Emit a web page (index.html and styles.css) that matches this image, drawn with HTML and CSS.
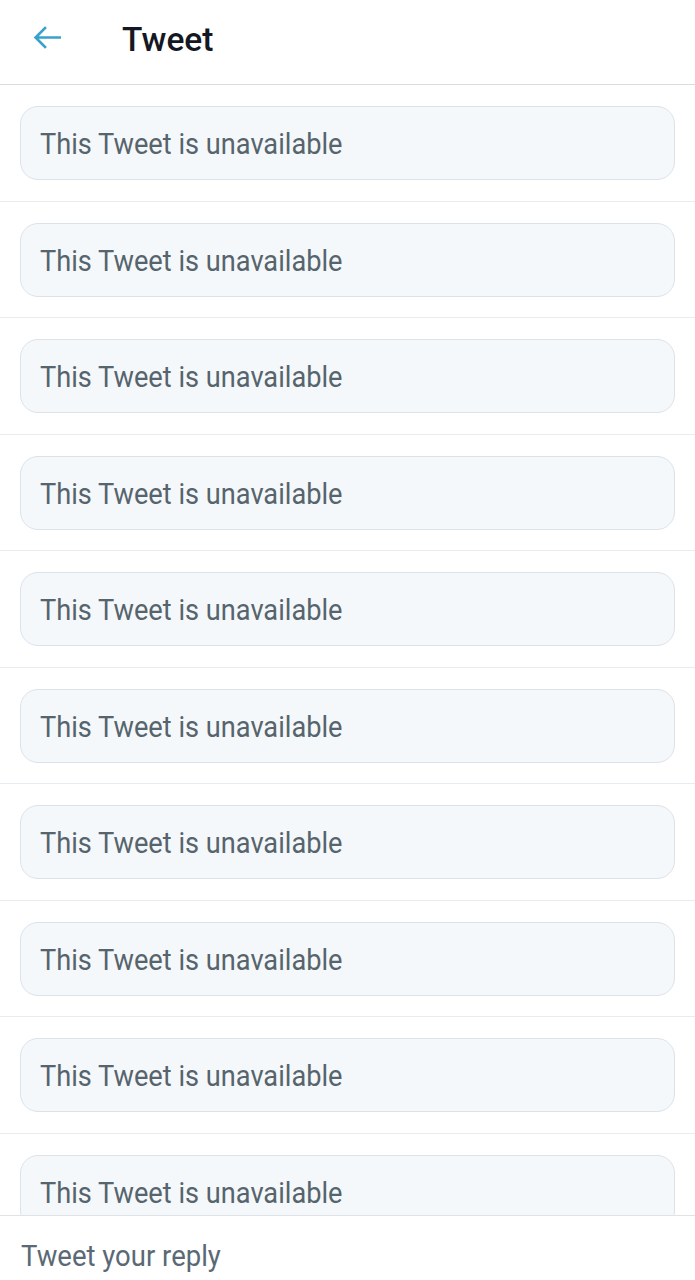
FILE: index.html
```html
<!DOCTYPE html>
<html>
<head>
<meta charset="utf-8">
<link rel="stylesheet" href="styles.css">
</head>
<body>
<div class="app">
  <header class="topbar">
    <svg class="back" viewBox="0 0 28 24" width="29" height="25"><path d="M27 12H2.5M12.5 2 2.5 12l10 10" fill="none" stroke="#38a1cc" stroke-width="2.6"/></svg>
    <h1 class="title">Tweet</h1>
  </header>
  <main class="list">
    <div class="row"><div class="card"><span class="msg">This Tweet is unavailable</span></div></div>
    <div class="row"><div class="card"><span class="msg">This Tweet is unavailable</span></div></div>
    <div class="row"><div class="card"><span class="msg">This Tweet is unavailable</span></div></div>
    <div class="row"><div class="card"><span class="msg">This Tweet is unavailable</span></div></div>
    <div class="row"><div class="card"><span class="msg">This Tweet is unavailable</span></div></div>
    <div class="row"><div class="card"><span class="msg">This Tweet is unavailable</span></div></div>
    <div class="row"><div class="card"><span class="msg">This Tweet is unavailable</span></div></div>
    <div class="row"><div class="card"><span class="msg">This Tweet is unavailable</span></div></div>
    <div class="row"><div class="card"><span class="msg">This Tweet is unavailable</span></div></div>
    <div class="row"><div class="card"><span class="msg">This Tweet is unavailable</span></div></div>
  </main>
  <footer class="reply"><span class="reply-text">Tweet your reply</span></footer>
</div>
</body>
</html>
```
FILE: styles.css
```css
html, body {
  margin: 0;
  padding: 0;
  background: #ffffff;
}
.app {
  width: 695px;
  height: 1280px;
  overflow: hidden;
  position: relative;
  font-family: Roboto, "Liberation Sans", sans-serif;
}
.topbar {
  height: 84px;
  border-bottom: 1px solid #dcdcdc;
  display: flex;
  align-items: center;
}
.back {
  margin-left: 33px;
  margin-top: -9px;
}
.title {
  margin: -6px 0 0 60px;
  font-size: 33.5px;
  font-weight: 500;
  color: #141823;
}
.list {
  display: flex;
  flex-direction: column;
}
.row {
  padding: 21px 20px 20.5px 20px;
  border-bottom: 1px solid #e6ecf0;
}
.card {
  height: 72px;
  border: 1px solid #dbe3e9;
  border-radius: 18px;
  background: #f5f8fa;
  display: flex;
  align-items: center;
  padding-left: 19px;
}
.msg {
  font-size: 27.2px;
  color: #56646d;
  display: inline-block;
  transform: scaleY(1.1);
  margin-top: 2px;
}
.reply {
  position: absolute;
  left: 0;
  right: 0;
  bottom: 0;
  height: 64px;
  border-top: 1px solid #dfe3e6;
  background: #ffffff;
  display: flex;
  align-items: center;
  padding-left: 21px;
}
.reply-text {
  font-size: 27.5px;
  color: #5a6975;
  display: inline-block;
  transform: scaleY(1.1);
  margin-top: 14px;
}
```
